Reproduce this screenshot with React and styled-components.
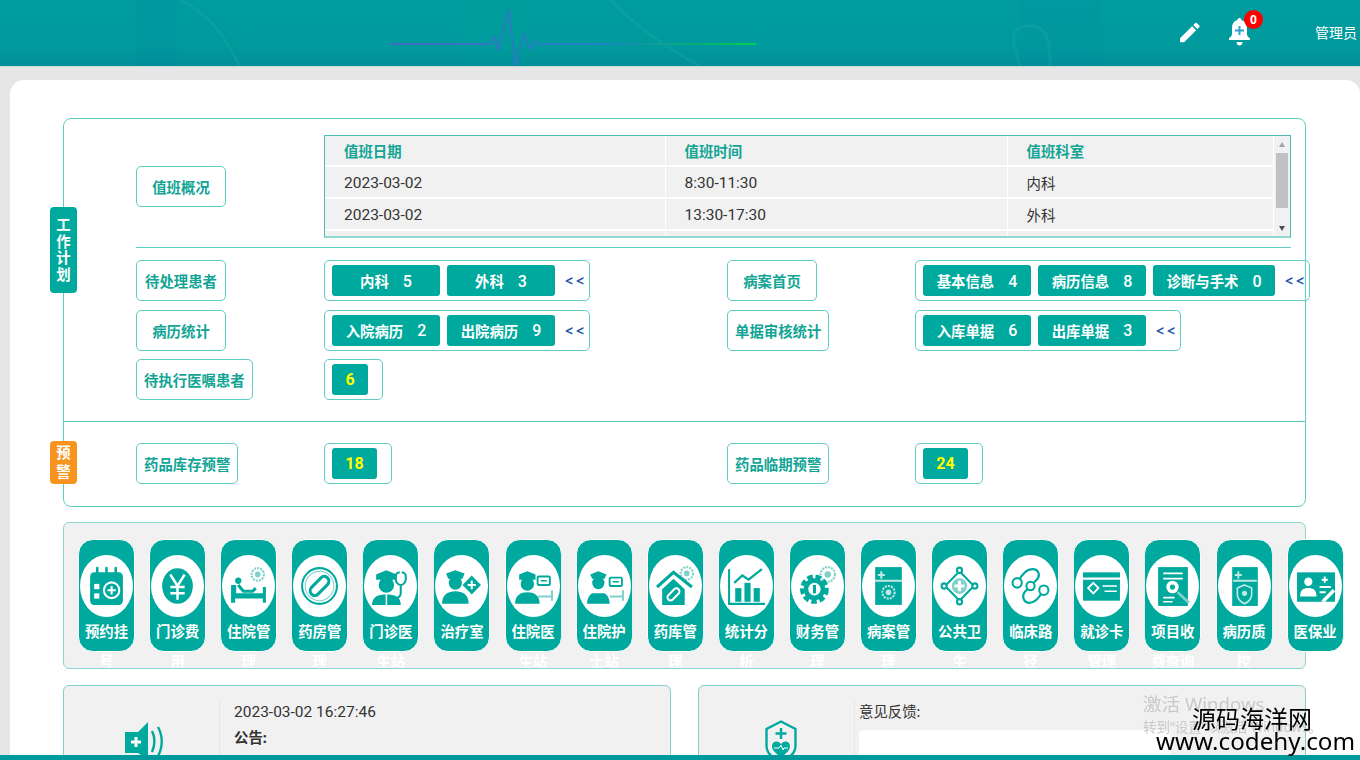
import styled, { createGlobalStyle } from "styled-components";

const TEAL = "#00a99d";

const GlobalStyle = createGlobalStyle`
  html, body {
    margin: 0;
    height: 100%;
    overflow: hidden;
    background: #e6e6e6;
    font-family: "Noto Sans", "Noto Sans CJK SC", sans-serif;
  }
  * { box-sizing: border-box; }
`;

const Header = styled.header`
  position: relative;
  height: 67px;
  display: flex;
  align-items: center;
  justify-content: flex-end;
  padding: 0 3px 2px 0;
  overflow: hidden;
  color: #fff;
  border-bottom: 1px solid #c9dcdb;
  background:
    linear-gradient(90deg, rgba(0, 150, 150, 0) 0 10%, rgba(0, 120, 160, 0.1) 10% 13%, rgba(0, 150, 150, 0) 13% 34%, rgba(0, 170, 150, 0.07) 34% 39%, rgba(0, 150, 150, 0) 39% 75%, rgba(0, 120, 160, 0.08) 75% 81%, rgba(0, 150, 150, 0) 81%),
    linear-gradient(180deg, #009c9f 0%, #009a9d 70%, #008f99 100%);
`;

const HeaderArt = styled.svg`
  position: absolute;
  left: 0;
  top: 0;
`;

const IconSlot = styled.div`
  position: relative;
  display: flex;
  margin-right: ${(p) => p.$gap}px;
`;

const Badge = styled.span`
  position: absolute;
  left: 15px;
  top: -8px;
  width: 19px;
  height: 19px;
  border-radius: 50%;
  background: #f00;
  color: #fff;
  font-size: 12px;
  font-weight: 700;
  line-height: 19px;
  text-align: center;
`;

const UserName = styled.span`
  margin-top: 2px;
  font-size: 14px;
  line-height: 20px;
`;

const Card = styled.main`
  margin: 13px 0 0 10px;
  padding: 38px 54px 0 53px;
  height: 700px;
  background: #fff;
  border-radius: 14px 14px 0 0;
`;

const Panel = styled.section`
  position: relative;
  border: 1px solid #5fcdc4;
  border-radius: 8px;
`;

const Section = styled.div`
  position: relative;
  padding: ${(p) => p.$padding};
  & + & {
    border-top: 1px solid #5fcdc4;
  }
`;

const SideTag = styled.div`
  position: absolute;
  left: -14px;
  top: ${(p) => p.$top}px;
  width: 27px;
  padding: ${(p) => p.$padY}px 0;
  border-radius: 4px;
  background: ${(p) => p.$color};
  color: #fff;
  font-size: 14.4px;
  font-weight: 700;
  line-height: ${(p) => p.$line}px;
  text-align: center;
`;

const DutyRow = styled.div`
  display: flex;
  align-items: center;
`;

const DutyLabelCell = styled.div`
  width: 188px;
  flex: none;
`;

const Label = styled.div`
  display: inline-flex;
  align-items: center;
  justify-content: center;
  justify-self: start;
  min-width: 90px;
  height: 41px;
  padding: 0 7px;
  border: 1px solid #5fcdc4;
  border-radius: 5px;
  color: #12a595;
  font-size: 14.4px;
  font-weight: 700;
  white-space: nowrap;
`;

const TableBox = styled.div`
  flex: 1;
  height: 103px;
  display: flex;
  overflow: hidden;
  border: 1px solid #4dbdb4;
  border-bottom: 2px solid #8fd9d3;
  background: #f1f1f1;
`;

const DutyTable = styled.table`
  flex: 1;
  table-layout: fixed;
  border-collapse: collapse;
  align-self: flex-start;
  font-size: 14.4px;
`;

const Th = styled.th`
  height: 30px;
  padding: 0 0 0 19px;
  border-bottom: 2px solid #fff;
  border-left: ${(p) => (p.$first ? "none" : "1px solid #fff")};
  color: #12a595;
  font-weight: 700;
  text-align: left;
`;

const Td = styled.td`
  height: 32px;
  padding: ${(p) => (p.$numeric ? "2px" : "0")} 0 0 19px;
  border-bottom: 2px solid #fff;
  border-left: ${(p) => (p.$first ? "none" : "1px solid #fff")};
  color: #333;
  font-family: ${(p) => (p.$numeric ? "Roboto, sans-serif" : "inherit")};
  font-size: ${(p) => (p.$numeric ? "15.5px" : "14.4px")};
`;

const ScrollBar = styled.div`
  width: 17px;
  flex: none;
  display: flex;
  flex-direction: column;
  align-items: center;
  padding: 6px 0 5px;
  border-left: 1px solid #fff;
`;

const ArrowUp = styled.span`
  border: 3.5px solid transparent;
  border-top: 0;
  border-bottom: 5px solid #a3a3a3;
`;

const ArrowDown = styled.span`
  margin-top: auto;
  border: 3.5px solid transparent;
  border-bottom: 0;
  border-top: 5px solid #505050;
`;

const ScrollThumb = styled.div`
  width: 12px;
  height: 55px;
  margin-top: 6px;
  background: #c1c1c1;
`;

const Rule = styled.hr`
  margin: 9px 0 12px;
  border: none;
  border-top: 1px solid #5fcdc4;
`;

const StatGrid = styled.div`
  display: grid;
  grid-template-columns: 188px 403px 188px 1fr;
  row-gap: 8.5px;
  align-items: start;
`;

const Group = styled.div`
  justify-self: start;
  display: flex;
  align-items: center;
  gap: 7px;
  width: max-content;
  min-width: ${(p) => p.$min || 0}px;
  height: 41px;
  padding: 0 5px 0 7px;
  border: 1px solid #5fcdc4;
  border-radius: 5px;
`;

const Chip = styled.div`
  display: flex;
  align-items: center;
  justify-content: center;
  gap: 14px;
  min-width: ${(p) => p.$min || 108}px;
  height: 31px;
  padding: 0 13px;
  border-radius: 3px;
  background: ${TEAL};
  color: #fff;
  font-size: 14.4px;
  font-weight: 700;
  white-space: nowrap;
`;

const ChipValue = styled.span`
  padding-top: 1px;
  font-family: Roboto, sans-serif;
  font-size: 16px;
  font-weight: 500;
`;

const Count = styled.div`
  display: flex;
  align-items: center;
  justify-content: center;
  width: ${(p) => p.$w}px;
  height: 31px;
  border-radius: 3px;
  background: ${TEAL};
  color: #ff0;
  font-family: Roboto, sans-serif;
  font-size: 16px;
  font-weight: 700;
`;

const Collapse = styled.span`
  margin-left: 3px;
  margin-right: -3px;
  color: #2356a8;
  font-size: 14px;
  font-weight: 700;
  letter-spacing: 3px;
`;

const Modules = styled.section`
  display: flex;
  gap: 14.1px;
  height: 147px;
  margin-top: 15px;
  padding: 16px 0 0 14px;
  border: 1px solid #8fd6d0;
  border-radius: 6px;
  background: #f1f1f1;
`;

const ModuleItem = styled.div`
  flex: none;
  width: 57px;
  height: 113px;
  padding-top: 15px;
  border: 1px solid #fff;
  border-radius: 15px;
  background: ${TEAL};
  clip-path: inset(0 0 -16px 0);
`;

const ModuleCircle = styled.div`
  display: flex;
  align-items: center;
  justify-content: center;
  width: 53px;
  height: 62px;
  margin: 0 auto;
  border-radius: 50%;
  background: #fff;
`;

const ModuleName = styled.div`
  padding: 0 5px;
  color: #fff;
  font-size: 14.4px;
  font-weight: 700;
  line-height: 30px;
  text-align: center;
`;

const BottomRow = styled.div`
  display: grid;
  grid-template-columns: 608px 608px;
  gap: 27px;
  margin-top: 16px;
`;

const InfoCard = styled.section`
  display: flex;
  height: 120px;
  padding-top: 15px;
  border: 1px solid #7fd2cb;
  border-radius: 6px;
  background: #f1f1f1;
`;

const InfoIcon = styled.div`
  flex: none;
  width: ${(p) => p.$w}px;
  padding: ${(p) => p.$top}px 0 0 8px;
  display: flex;
  justify-content: center;
  border-right: 1px solid #e6e6e6;
`;

const InfoBody = styled.div`
  flex: 1;
  padding-left: ${(p) => p.$left}px;
  color: #333;
  font-size: 14.4px;
`;

const InfoLine = styled.div`
  line-height: 22px;
  margin-bottom: ${(p) => p.$mb || 0}px;
  font-weight: ${(p) => (p.$bold ? 700 : 400)};
`;

const InfoStamp = styled(InfoLine)`
  font-family: Roboto, sans-serif;
  font-size: 15.5px;
`;

const FeedbackBox = styled.div`
  width: 311px;
  height: 60px;
  margin-top: 7px;
  border-radius: 4px;
  background: #fff;
`;

const Footer = styled.footer`
  position: fixed;
  left: 0;
  right: 0;
  bottom: 0;
  height: 5px;
  background: #009a9d;
`;

const Activation = styled.div`
  position: fixed;
  left: 1143px;
  top: 690px;
  color: #c9c9c9;
  white-space: nowrap;
`;

const ActivationTitle = styled.div`
  font-size: 18.6px;
  line-height: 27px;
`;

const ActivationHint = styled.div`
  font-size: 13.5px;
  line-height: 20px;
`;

const Stamp = styled.div`
  position: fixed;
  right: 5px;
  top: 704px;
  color: #000;
  text-align: right;
  white-space: nowrap;
`;

const StampName = styled.div`
  margin-right: 43px;
  font-size: 24px;
  line-height: 30px;
`;

const StampUrl = styled.div`
  margin-top: -5px;
  font-size: 24.2px;
  line-height: 24px;
`;

const T = TEAL;
const Gear = ({ x, y, r = 6, c = "#7fd2cb" }) => (
  <g>
    <circle cx={x} cy={y} r={r} fill="none" stroke={c} strokeWidth="2" strokeDasharray="2 1" />
    <circle cx={x} cy={y} r={r * 0.45} fill={c} />
  </g>
);

const icons = [
  // 预约挂号
  <>
    <rect x="4" y="7" width="32" height="31" rx="4" fill={T} />
    <path d="M11 3v7M20 3v7M29 3v7" stroke={T} strokeWidth="2.5" strokeLinecap="round" />
    <rect x="8" y="18" width="5" height="5" fill="#fff" />
    <rect x="8" y="27" width="5" height="5" fill="#fff" />
    <circle cx="25" cy="24" r="7.5" fill="none" stroke="#fff" strokeWidth="2" />
    <path d="M25 20v8M21 24h8" stroke="#fff" strokeWidth="2" />
  </>,
  // 门诊费用
  <>
    <ellipse cx="20" cy="20" rx="15" ry="17" fill={T} />
    <path d="M13 9l7 11 7-11M20 20v13M13 21h14M13 27h14" stroke="#fff" strokeWidth="2.4" fill="none" />
  </>,
  // 住院管理
  <>
    <Gear x="29" y="9" r="6" />
    <circle cx="10" cy="15" r="3" fill={T} />
    <path d="M5 19h3v8h26v-6h3v15h-3v-4H7v4H3V19z" fill={T} />
    <path d="M10 19l5 6h9l3-3" stroke={T} strokeWidth="3" fill="none" />
  </>,
  // 药房管理
  <>
    <circle cx="20" cy="20" r="17" fill="none" stroke={T} strokeWidth="2" />
    <circle cx="20" cy="20" r="14" fill="none" stroke="#7fd2cb" strokeWidth="1" />
    <rect x="9" y="15.5" width="22" height="9" rx="4.5" transform="rotate(-45 20 20)" fill="none" stroke={T} strokeWidth="3" />
  </>,
  // 门诊医生站
  <>
    <path d="M6 9l10-4 10 4v5H6z" fill={T} />
    <circle cx="16" cy="19" r="7.5" fill={T} />
    <path d="M2 38c0-8 6-10 14-10s14 2 14 10z" fill={T} />
    <path d="M16 28v10" stroke="#fff" strokeWidth="1.5" />
    <path d="M29 7c-4 0-4 3-4 6 0 4 3 6 5 6s5-2 5-6c0-3 0-6-4-6M30 19v8c0 3-2 4-4 5" fill="none" stroke={T} strokeWidth="2" />
  </>,
  // 治疗室
  <>
    <path d="M5 8l9-3 9 3-2 5H7z" fill={T} />
    <circle cx="14" cy="17" r="6.5" fill={T} />
    <path d="M1 37c0-9 6-12 13-12s13 3 13 12z" fill={T} />
    <path d="M30 10l9 9-9 9-9-9z" fill={T} />
    <path d="M30 15v8M26 19h8" stroke="#fff" strokeWidth="2" />
  </>,
  // 住院医生站
  <>
    <path d="M6 9l8-3 8 3v5H6z" fill={T} />
    <circle cx="14" cy="18" r="6.5" fill={T} />
    <path d="M2 37c0-8 5-11 12-11s12 3 12 11z" fill={T} />
    <rect x="24" y="11" width="12" height="8" rx="1" fill="none" stroke={T} strokeWidth="1.8" />
    <path d="M27 15h6" stroke={T} strokeWidth="1.5" />
    <path d="M24 30h15M38 24v10" stroke="#7fd2cb" strokeWidth="2" />
  </>,
  // 住院护士站
  <>
    <path d="M6 9l8-3 8 3-2 4H8z" fill={T} />
    <circle cx="14" cy="17" r="6" fill={T} />
    <path d="M3 37c0-5 2-8 5-10h12c3 2 5 5 5 10z" fill={T} />
    <rect x="25" y="12" width="12" height="8" rx="1" fill="none" stroke={T} strokeWidth="1.8" />
    <path d="M28 16h6" stroke={T} strokeWidth="1.5" />
    <path d="M25 30h14M38 24v10" stroke="#7fd2cb" strokeWidth="2" />
  </>,
  // 药库管理
  <>
    <Gear x="31" y="8" r="6" />
    <path d="M2 21L18 7l18 14" fill="none" stroke={T} strokeWidth="3" />
    <path d="M7 23L18 13l11 10v15H7z" fill={T} />
    <rect x="11" y="25" width="14" height="6" rx="3" transform="rotate(-45 18 28)" fill="none" stroke="#fff" strokeWidth="2" />
  </>,
  // 统计分析
  <>
    <path d="M3 4v33h35" fill="none" stroke={T} strokeWidth="2" />
    <rect x="9" y="22" width="6" height="13" fill={T} />
    <rect x="18" y="17" width="6" height="18" fill={T} />
    <rect x="27" y="22" width="6" height="13" fill={T} />
    <path d="M8 17l8-7 6 4 13-10" fill="none" stroke={T} strokeWidth="2.2" />
  </>,
  // 财务管理
  <>
    <Gear x="30" y="9" r="7" />
    <circle cx="17" cy="23" r="11" fill="none" stroke={T} strokeWidth="6" strokeDasharray="5 2.5" />
    <circle cx="17" cy="23" r="10.5" fill={T} />
    <circle cx="17" cy="23" r="6" fill="#fff" />
    <path d="M17 19v8" stroke={T} strokeWidth="3" />
  </>,
  // 病案管理
  <>
    <rect x="7" y="2" width="26" height="36" fill={T} />
    <path d="M13 6v7M9.5 9.5h7M7 15h26" stroke="#bfe9e5" strokeWidth="2" />
    <Gear x="20" y="26" r="6" c="#bfe9e5" />
  </>,
  // 公共卫生
  <>
    <path d="M20 6L34 20 20 34 6 20z" fill="none" stroke={T} strokeWidth="2" />
    <circle cx="20" cy="5" r="2.5" fill="#fff" stroke={T} strokeWidth="2" />
    <circle cx="20" cy="35" r="2.5" fill="#fff" stroke={T} strokeWidth="2" />
    <circle cx="5" cy="20" r="2.5" fill="#fff" stroke={T} strokeWidth="2" />
    <circle cx="35" cy="20" r="2.5" fill="#fff" stroke={T} strokeWidth="2" />
    <circle cx="20" cy="20" r="7.5" fill="#7fd2cb" />
    <path d="M20 15v10M15 20h10" stroke="#fff" strokeWidth="3" />
  </>,
  // 临床路径
  <>
    <path d="M8 16c3-6 8-12 14-12 6 0 8 6 4 10l-11 11c-4 4-2 11 4 11 5 0 9-4 13-11" fill="none" stroke={T} strokeWidth="2.2" />
    <circle cx="7" cy="17" r="4.5" fill="#fff" stroke={T} strokeWidth="2" />
    <circle cx="20" cy="20" r="4" fill="#fff" stroke={T} strokeWidth="2" />
    <circle cx="33" cy="24" r="4.5" fill="#fff" stroke={T} strokeWidth="2" />
  </>,
  // 就诊卡管理
  <>
    <rect x="2" y="7" width="36" height="27" fill={T} />
    <path d="M2 13h36" stroke="#fff" strokeWidth="2" />
    <path d="M12 17l5 5-5 5-5-5z" fill="none" stroke="#fff" strokeWidth="1.8" />
    <path d="M21 20h14M23 25h12" stroke="#fff" strokeWidth="1.6" />
  </>,
  // 项目收费查询
  <>
    <rect x="6" y="2" width="29" height="37" fill={T} />
    <path d="M11 8h19M11 13h19M11 31h11M11 35h9" stroke="#fff" strokeWidth="1.6" />
    <circle cx="20" cy="21" r="6" fill="#fff" />
    <circle cx="20" cy="21" r="2.5" fill={T} />
    <path d="M25 26l11 10" stroke="#7fd2cb" strokeWidth="2.6" />
  </>,
  // 病历质控
  <>
    <rect x="8" y="2" width="25" height="37" fill={T} />
    <path d="M14 6v7M10.5 9.5h7M9 15h23" stroke="#bfe9e5" strokeWidth="1.8" />
    <path d="M20 19l7 3v6c0 4-3 7-7 9-4-2-7-5-7-9v-6z" fill="none" stroke="#bfe9e5" strokeWidth="1.6" />
    <circle cx="20" cy="27" r="2.5" fill="#bfe9e5" />
  </>,
  // 医保业务
  <>
    <rect x="2" y="7" width="37" height="28" fill={T} />
    <circle cx="13" cy="16" r="4" fill="#fff" />
    <path d="M5 30c0-6 3-8 8-8s8 2 8 8z" fill="#fff" />
    <path d="M29 11v6M26 14h6M24 21h11M24 26h6" stroke="#fff" strokeWidth="1.8" />
    <path d="M27 35l11-11" stroke="#fff" strokeWidth="3.4" />
  </>,
];

const moduleNames = [
  "预约挂号", "门诊费用", "住院管理", "药房管理", "门诊医生站", "治疗室",
  "住院医生站", "住院护士站", "药库管理", "统计分析", "财务管理", "病案管理",
  "公共卫生", "临床路径", "就诊卡管理", "项目收费查询", "病历质控", "医保业务",
];

const dutyRows = [
  ["2023-03-02", "8:30-11:30", "内科"],
  ["2023-03-02", "13:30-17:30", "外科"],
  ["", "", ""],
];

const Stat = ({ name, value, min }) => (
  <Chip $min={min}>
    <span>{name}</span>
    <ChipValue>{value}</ChipValue>
  </Chip>
);

const App = () => {
  return (
    <>
      <GlobalStyle />
      <Header>
        <HeaderArt width="1360" height="66" viewBox="0 0 1360 66">
          <defs>
            <linearGradient id="ecg" x1="0" x2="1" y1="0" y2="0">
              <stop offset="0" stopColor="#3f6cc4" />
              <stop offset="0.6" stopColor="#1a86c0" />
              <stop offset="0.85" stopColor="#08b070" />
              <stop offset="1" stopColor="#00d050" />
            </linearGradient>
          </defs>
          <path d="M180 0c40 20 50 50 60 66M610 0c30 30 60 50 90 66M1020 66c-10-30-10-40 10-40s20 20 20 40" fill="none" stroke="#29adab" strokeOpacity="0.25" strokeWidth="3" />
          <path d="M390 44h100l5-7 3 13 6-23 5-17 6 56 9-32 6 15 5-8 4 5 4-2h213" fill="none" stroke="url(#ecg)" strokeWidth="1.8" />
        </HeaderArt>
        <IconSlot $gap={29}>
          <svg width="20" height="21" viewBox="3 3 18.3 18">
            <path fill="#fff" d="M3 17.25V21h3.75L17.81 9.94l-3.75-3.75L3 17.25zM20.71 7.04c.39-.39.39-1.02 0-1.41l-2.34-2.34c-.39-.39-1.02-.39-1.41 0l-1.83 1.83 3.75 3.75 1.83-1.83z" />
          </svg>
        </IconSlot>
        <IconSlot $gap={65}>
          <svg width="21" height="28" viewBox="0 0 21 28">
            <path fill="#fff" d="M10.5 0c1.4 0 2 1 2 2.2 3.8 1 5.5 4 5.5 8v6c0 1.6 1.5 3 3 4.3V22H0v-1.7c1.5-1.3 3-2.7 3-4.3v-6c0-4 1.7-7 5.5-8C8.5 1 9.1 0 10.5 0z" />
            <path fill="#fff" d="M7.5 24h6c0 2-1.3 3.5-3 3.5S7.5 26 7.5 24z" />
            <path d="M10.5 8v9M6 12.5h9" stroke="#2f9fd0" strokeWidth="2" />
          </svg>
          <Badge>0</Badge>
        </IconSlot>
        <UserName>管理员</UserName>
      </Header>

      <Card>
        <Panel>
          <Section $padding="16px 14px 21px 72px">
            <SideTag $top={88} $padY={10} $line={16.5} $color={TEAL}>
              工作计划
            </SideTag>
            <DutyRow>
              <DutyLabelCell>
                <Label>值班概况</Label>
              </DutyLabelCell>
              <TableBox>
                <DutyTable>
                  <colgroup>
                    <col style={{ width: 340 }} />
                    <col style={{ width: 342 }} />
                    <col />
                  </colgroup>
                  <thead>
                    <tr>
                      <Th $first>值班日期</Th>
                      <Th>值班时间</Th>
                      <Th>值班科室</Th>
                    </tr>
                  </thead>
                  <tbody>
                    {dutyRows.map((row, i) => (
                      <tr key={i}>
                        {row.map((cell, j) => (
                          <Td key={j} $first={j === 0} $numeric={j < 2}>
                            {cell}
                          </Td>
                        ))}
                      </tr>
                    ))}
                  </tbody>
                </DutyTable>
                <ScrollBar>
                  <ArrowUp />
                  <ScrollThumb />
                  <ArrowDown />
                </ScrollBar>
              </TableBox>
            </DutyRow>
            <Rule />
            <StatGrid>
              <Label>待处理患者</Label>
              <Group>
                <Stat name="内科" value="5" />
                <Stat name="外科" value="3" />
                <Collapse>&lt;&lt;</Collapse>
              </Group>
              <Label>病案首页</Label>
              <Group>
                <Stat name="基本信息" value="4" />
                <Stat name="病历信息" value="8" />
                <Stat name="诊断与手术" value="0" min={122} />
                <Collapse>&lt;&lt;</Collapse>
              </Group>

              <Label>病历统计</Label>
              <Group>
                <Stat name="入院病历" value="2" />
                <Stat name="出院病历" value="9" />
                <Collapse>&lt;&lt;</Collapse>
              </Group>
              <Label>单据审核统计</Label>
              <Group>
                <Stat name="入库单据" value="6" />
                <Stat name="出库单据" value="3" />
                <Collapse>&lt;&lt;</Collapse>
              </Group>

              <Label>待执行医嘱患者</Label>
              <Group $min={59}>
                <Count $w={36}>6</Count>
              </Group>
            </StatGrid>
          </Section>
          <Section $padding="21px 14px 22px 72px">
            <SideTag $top={19} $padY={3} $line={18.5} $color="#f7931e">
              预警
            </SideTag>
            <StatGrid>
              <Label>药品库存预警</Label>
              <Group $min={68}>
                <Count $w={45}>18</Count>
              </Group>
              <Label>药品临期预警</Label>
              <Group $min={68}>
                <Count $w={45}>24</Count>
              </Group>
            </StatGrid>
          </Section>
        </Panel>

        <Modules>
          {moduleNames.map((name, i) => (
            <ModuleItem key={name}>
              <ModuleCircle>
                <svg width="41" height="42" viewBox="0 0 40 40" preserveAspectRatio="none">
                  {icons[i]}
                </svg>
              </ModuleCircle>
              <ModuleName>{name}</ModuleName>
            </ModuleItem>
          ))}
        </Modules>

        <BottomRow>
          <InfoCard>
            <InfoIcon $w={156} $top={21}>
              <svg width="42" height="40" viewBox="0 0 42 40">
                <path d="M0 10h13L23 0v38L13 31H0z" fill={TEAL} />
                <path d="M11 15v10M6 20h10" stroke="#fff" strokeWidth="3" />
                <path d="M27 9c3 6 3 14 0 21M33 5c5 9 5 20 0 29" fill="none" stroke={TEAL} strokeWidth="2.4" />
              </svg>
            </InfoIcon>
            <InfoBody $left={14}>
              <InfoStamp $mb={4}>2023-03-02 16:27:46</InfoStamp>
              <InfoLine $bold>公告:</InfoLine>
            </InfoBody>
          </InfoCard>
          <InfoCard>
            <InfoIcon $w={156} $top={19}>
              <svg width="32" height="42" viewBox="0 0 32 42">
                <path d="M16 1.5L30.5 9v17c0 7-6 12-14.5 15C7.5 38 1.5 33 1.5 26V9z" fill="none" stroke={TEAL} strokeWidth="2.4" />
                <path d="M16 8v11M10.5 13.5h11" stroke={TEAL} strokeWidth="2.4" />
                <path d="M16 37c-6-4-9-7-9-11 0-5 6-6 9-2 3-4 9-3 9 2 0 4-3 7-9 11z" fill={TEAL} />
                <path d="M9 28h5l2-3 2 5 1-2h4" fill="none" stroke="#fff" strokeWidth="1" />
              </svg>
            </InfoIcon>
            <InfoBody $left={4}>
              <InfoLine>意见反馈:</InfoLine>
              <FeedbackBox />
            </InfoBody>
          </InfoCard>
        </BottomRow>
      </Card>

      <Footer />
      <Activation>
        <ActivationTitle>激活 Windows</ActivationTitle>
        <ActivationHint>转到“设置”以激活 Windows。</ActivationHint>
      </Activation>
      <Stamp>
        <StampName>源码海洋网</StampName>
        <StampUrl>www.codehy.com</StampUrl>
      </Stamp>
    </>
  );
};

export default App;
